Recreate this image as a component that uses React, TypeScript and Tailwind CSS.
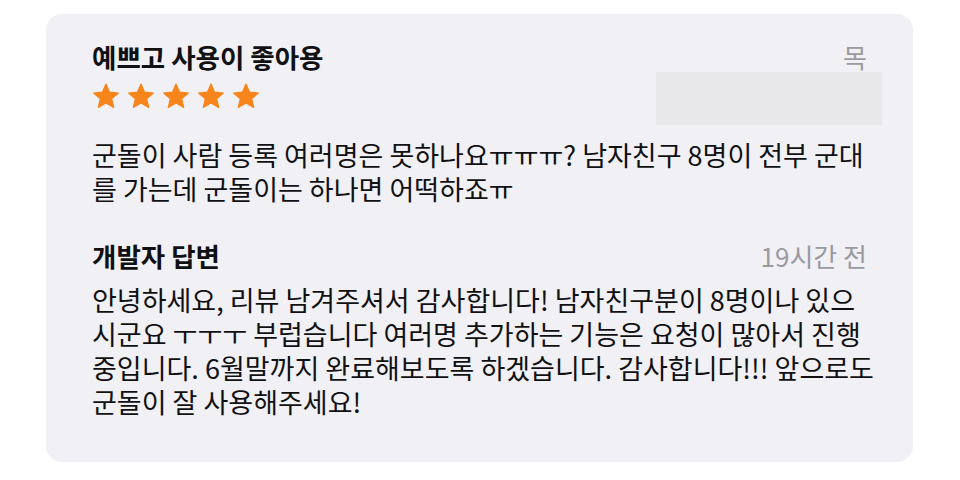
const font = { fontFamily: '"Noto Sans CJK KR", "Noto Sans", sans-serif' }

function Star() {
  return (
    <svg viewBox="0 0 24 24" className="h-[28px] w-[28px]">
      <path
        d="M12 1.8l3.1 6.9 7.5.7-5.7 5 1.7 7.4L12 17.9l-6.6 3.9 1.7-7.4-5.7-5 7.5-.7z"
        fill="#f7851b"
        stroke="#f7851b"
        strokeWidth="1"
        strokeLinejoin="round"
      />
    </svg>
  )
}

export default function App() {
  return (
    <div className="h-[480px] w-[960px] bg-white pt-[14px] pl-[46px]" style={font}>
      <div className="relative h-[448px] w-[867px] rounded-[16px] bg-[#f0f0f5] px-[46px] pt-[27px] text-[#111113]">
        <div className="flex items-center justify-between">
          <h2 className="text-[26.5px] leading-[32px] font-bold">예쁘고 사용이 좋아용</h2>
          <span className="text-[26px] leading-[32px] text-[#9a9aa0]">목</span>
        </div>
        <div className="mt-[9px] flex gap-[7px]">
          <Star />
          <Star />
          <Star />
          <Star />
          <Star />
        </div>
        <div className="absolute top-[58px] right-[31px] h-[53px] w-[226px] bg-[#e8e8ea]" />

        <p className="mt-[28px] text-[27px] leading-[34px] whitespace-nowrap">
          군돌이 사람 등록 여러명은 못하나요ㅠㅠㅠ? 남자친구 8명이 전부 군대
          <br />를 가는데 군돌이는 하나면 어떡하죠ㅠ
        </p>

        <div className="mt-[34px] flex items-center justify-between">
          <h3 className="text-[26.5px] leading-[32px] font-bold">개발자 답변</h3>
          <span className="text-[26px] leading-[32px] text-[#9a9aa0]">19시간 전</span>
        </div>
        <p className="mt-[11px] text-[27px] leading-[34px] whitespace-nowrap">
          안녕하세요, 리뷰 남겨주셔서 감사합니다! 남자친구분이 8명이나 있으
          <br />시군요 ㅜㅜㅜ 부럽습니다 여러명 추가하는 기능은 요청이 많아서 진행
          <br />중입니다. 6월말까지 완료해보도록 하겠습니다. 감사합니다!!! 앞으로도
          <br />군돌이 잘 사용해주세요!
        </p>
      </div>
    </div>
  )
}
